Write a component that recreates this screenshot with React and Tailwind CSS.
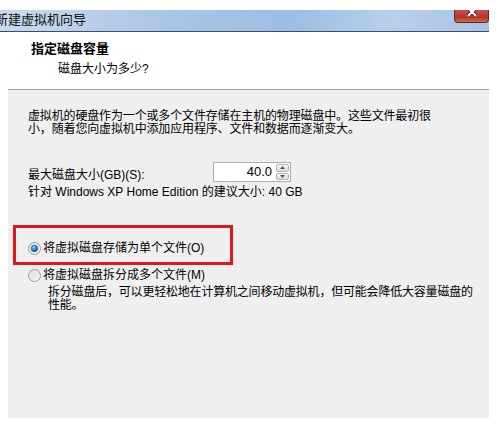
import React from "react";

function Radio({ checked }) {
  return (
    <svg width="13" height="13" viewBox="0 0 13 13" className="shrink-0">
      <defs>
        <linearGradient id={checked ? "rg1" : "rg0"} x1="0" y1="0" x2="1" y2="1">
          <stop offset="0" stopColor="#d6d6d6" />
          <stop offset="1" stopColor="#fbfbfb" />
        </linearGradient>
        <radialGradient id="dot" cx="0.4" cy="0.35" r="0.7">
          <stop offset="0" stopColor="#9fd4fa" />
          <stop offset="0.5" stopColor="#2c7fd0" />
          <stop offset="1" stopColor="#0d3f7c" />
        </radialGradient>
      </defs>
      <circle cx="6.5" cy="6.5" r="6" fill={`url(#${checked ? "rg1" : "rg0"})`} stroke="#9a9a9a" strokeWidth="1" />
      <circle cx="6.5" cy="6.5" r="4.6" fill="none" stroke="#eaeaea" strokeWidth="0.8" />
      {checked && <circle cx="6.5" cy="6.5" r="3.3" fill="url(#dot)" stroke="#1b4f8a" strokeWidth="0.5" />}
    </svg>
  );
}

export default function App() {
  return (
    <div className="relative w-[498px] h-[428px] overflow-hidden bg-white text-black font-['Liberation_Sans','Noto_Sans_CJK_SC',sans-serif] text-[12px]">
      <div className="h-[10px]" />
      {/* title bar */}
      <div className="flex w-[489px] h-[22px] border-b border-[#3f4d5e] bg-[linear-gradient(90deg,#c8daee_0%,#a9c5e6_35%,#9dbde3_60%,#b7d0ec_80%,#a6c3e6_100%)]">
        <div className="-ml-[5px] mt-[3px] text-[13px] leading-[14px] text-[#111] whitespace-nowrap">新建虚拟机向导</div>
        <div className="ml-auto w-[35px] h-[13px] rounded-b-[4px] border border-t-0 border-[#5a2a24] bg-[linear-gradient(180deg,#c9504a_0%,#b8352c_60%,#d4684a_100%)] flex justify-center">
          <svg width="10" height="7" viewBox="0 0 10 7">
            <path d="M1 -2 L9 6 M9 -2 L1 6" stroke="#3a1a16" strokeWidth="3.4" />
            <path d="M1 -2 L9 6 M9 -2 L1 6" stroke="#ffffff" strokeWidth="2" />
          </svg>
        </div>
      </div>
      {/* header */}
      <div className="w-[489px] h-[57px] bg-white pt-[10px]">
        <div className="pl-[31px] text-[13px] leading-[14px] font-bold">指定磁盘容量</div>
        <div className="pl-[58px] mt-[6px] text-[12px] leading-[14px]">磁盘大小为多少?</div>
      </div>
      <div className="ml-[8px] w-[481px] h-px bg-[#a0a0a0]" />
      {/* body */}
      <div className="ml-[8px] w-[481px] h-[328px] bg-[#efefef] pl-[20px] pt-[20px]">
        <div className="leading-[13px] tracking-[-0.15px] whitespace-nowrap">
          虚拟机的硬盘作为一个或多个文件存储在主机的物理磁盘中。这些文件最初很
          <br />
          小，随着您向虚拟机中添加应用程序、文件和数据而逐渐变大。
        </div>
        <div className="flex items-start mt-[26px]">
          <div className="w-[185px] mt-[7px] leading-[13px] whitespace-nowrap">最大磁盘大小(GB)(S):</div>
          <div className="flex w-[78px] h-[20px] border border-[#abadb3] bg-white">
            <div className="flex-1 text-right pr-[3px] text-[13px] leading-[18px]">40.0</div>
            <div className="w-[15px] flex flex-col gap-px p-px">
              <div className="flex-1 border border-[#b4b4b4] rounded-[2px] bg-[linear-gradient(180deg,#f6f6f6,#dedede)] flex items-center justify-center">
                <svg width="5" height="3" viewBox="0 0 5 3"><path d="M0 3 L2.5 0 L5 3 Z" fill="#4a5a70" /></svg>
              </div>
              <div className="flex-1 border border-[#b4b4b4] rounded-[2px] bg-[linear-gradient(180deg,#f6f6f6,#dedede)] flex items-center justify-center">
                <svg width="5" height="3" viewBox="0 0 5 3"><path d="M0 0 L2.5 3 L5 0 Z" fill="#4a5a70" /></svg>
              </div>
            </div>
          </div>
        </div>
        <div className="mt-[4px] leading-[13px] whitespace-nowrap">针对 Windows XP Home Edition 的建议大小: 40 GB</div>
        <div className="mt-[42px] flex items-center gap-[2px] h-[14px] whitespace-nowrap">
          <Radio checked />
          <span className="leading-[13px]">将虚拟磁盘存储为单个文件(O)</span>
        </div>
        <div className="mt-[13px] flex items-center gap-[2px] h-[14px] whitespace-nowrap">
          <Radio checked={false} />
          <span className="leading-[13px]">将虚拟磁盘拆分成多个文件(M)</span>
        </div>
        <div className="mt-[4px] pl-[20px] leading-[13px] tracking-[-0.2px] whitespace-nowrap">
          拆分磁盘后，可以更轻松地在计算机之间移动虚拟机，但可能会降低大容量磁盘的
          <br />
          性能。
        </div>
      </div>
      {/* red annotation box */}
      <div className="absolute left-[13px] top-[225px] w-[220px] h-[40px] border-[3px] border-[#e3141b]" />
    </div>
  );
}
